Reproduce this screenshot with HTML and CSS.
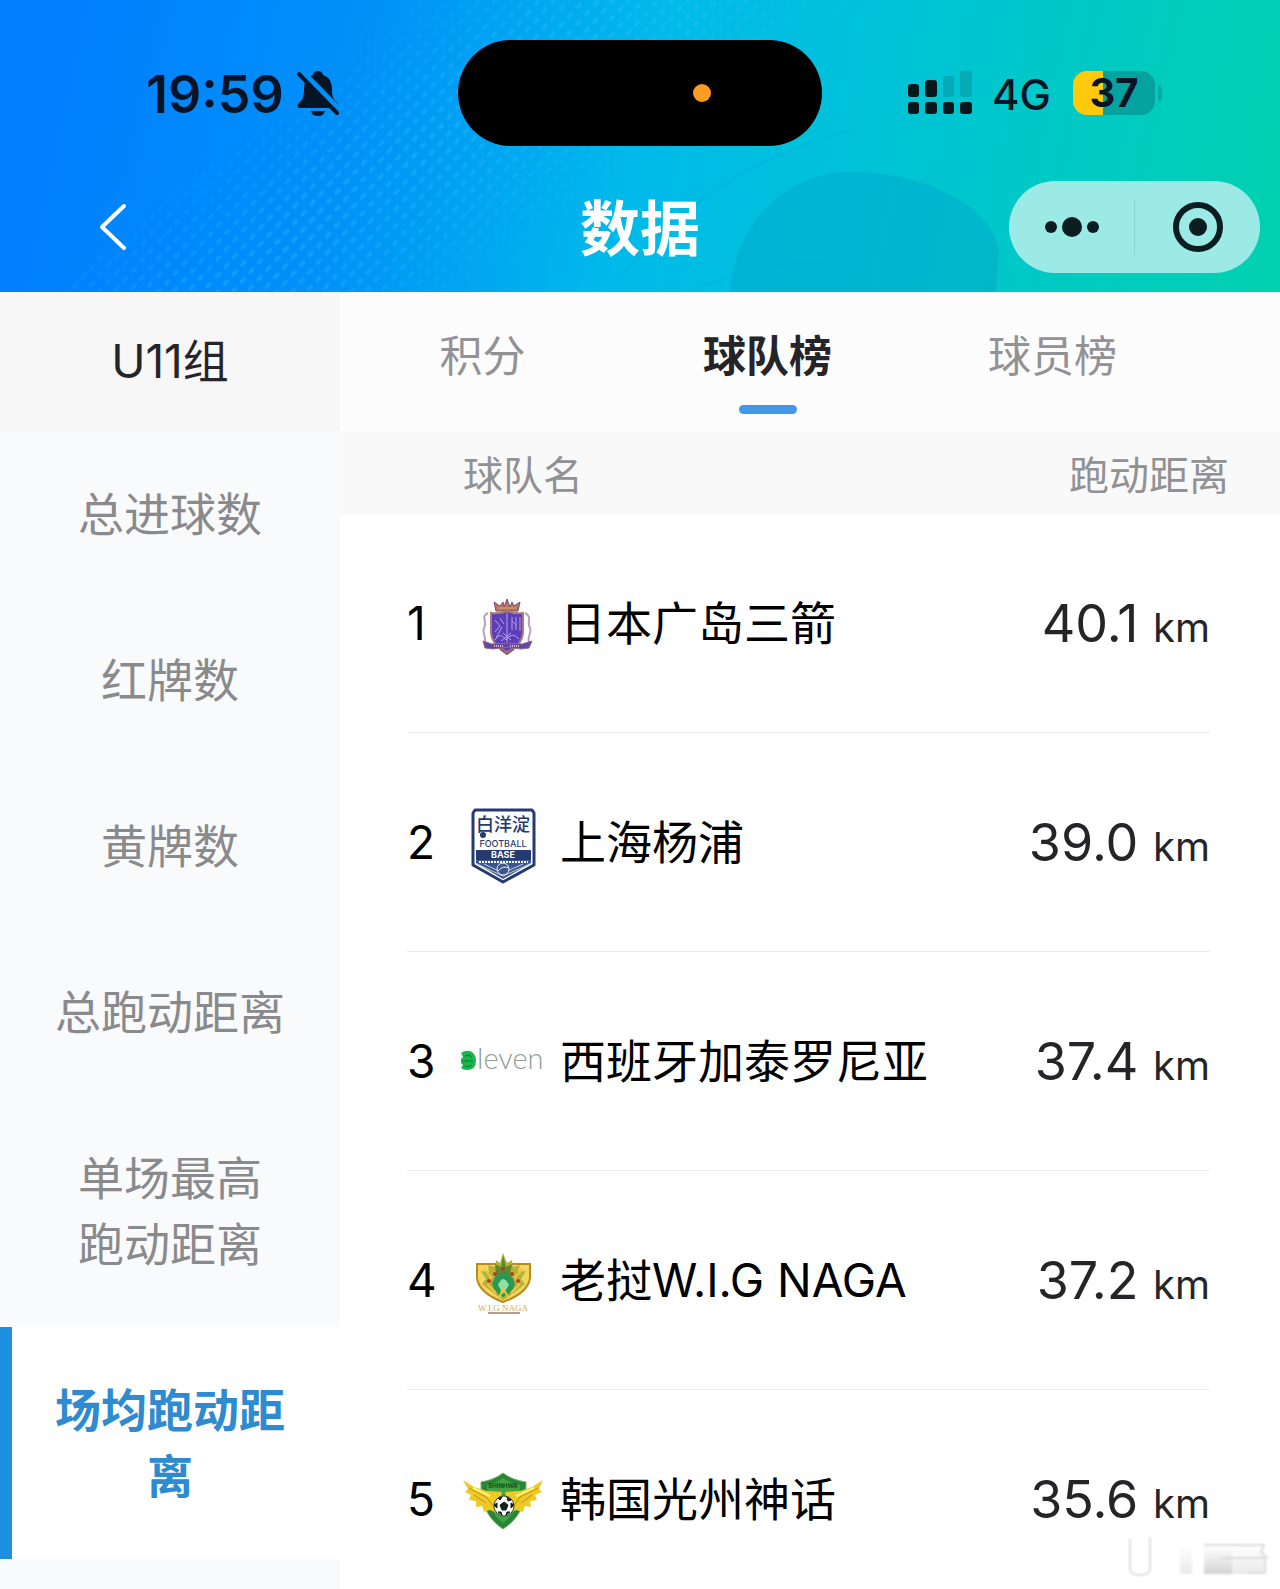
FILE: index.html
```html
<!DOCTYPE html>
<html lang="zh-CN">
<head>
    <meta charset="UTF-8">
    <meta name="viewport" content="width=device-width, initial-scale=1.0">
    <title>数据</title>
    <link rel="stylesheet" href="styles.css">
</head>
<body>
    <header class="header">
        <!-- Dotted texture and soft circles behind the header -->
        <svg class="header-art" viewBox="0 0 1280 292" preserveAspectRatio="none" aria-hidden="true">
            <defs>
                <pattern id="dots" width="13" height="11" patternUnits="userSpaceOnUse" patternTransform="rotate(-48)">
                    <ellipse cx="6" cy="5" rx="4" ry="2" fill="#3cc4ff"/>
                </pattern>
                <linearGradient id="fade" gradientUnits="userSpaceOnUse" x1="330" y1="40" x2="530" y2="310">
                    <stop offset="0" stop-color="#fff" stop-opacity="0"/>
                    <stop offset="0.4" stop-color="#fff" stop-opacity="0.3"/>
                    <stop offset="0.65" stop-color="#fff" stop-opacity="0.2"/>
                    <stop offset="0.9" stop-color="#fff" stop-opacity="0"/>
                </linearGradient>
                <mask id="band"><polygon points="60,292 380,0 860,0 480,292" fill="url(#fade)"/></mask>
            </defs>
            <rect width="1280" height="292" fill="url(#dots)" mask="url(#band)"/>
            <path d="M730 292 C735 225 785 172 850 172 C925 172 990 205 999 250 L996 292 Z" fill="#00a8cc" opacity="0.5"/>
            <path d="M610 292 C660 220 740 160 850 130 M690 292 C740 270 780 262 830 262" fill="none" stroke="#009fd8" stroke-width="2" opacity="0.2"/>
        </svg>

        <div class="status-bar">
            <div class="status-left">
                <span class="time">19:59</span>
                <svg class="bell" viewBox="0 0 42 46" aria-hidden="true">
                    <path d="M21 1 C24 1 26 3 26 5 C33 7 35 13 35 20 C35 28 38 31 41 34 C42 36 41 38 39 38 L3 38 C1 38 0 36 1 34 C5 30 7 28 7 20 C7 13 9 7 16 5 C16 3 18 1 21 1 Z" fill="#071426"/>
                    <path d="M14 41 H28 C27 44 25 46 21 46 C17 46 15 44 14 41 Z" fill="#071426"/>
                    <path d="M3 1 L41 40" stroke="#0091f8" stroke-width="8"/>
                    <path d="M2 4 L40 43" stroke="#071426" stroke-width="4" stroke-linecap="round"/>
                </svg>
            </div>
            <div class="island"><span class="island-dot"></span></div>
            <div class="status-right">
                <svg class="signal" viewBox="0 0 64 44" aria-hidden="true">
                    <g fill="#06181c">
                        <rect x="0" y="13" width="11" height="13" rx="3"/>
                        <rect x="17" y="9" width="12" height="17" rx="3"/>
                        <rect x="0" y="31" width="11" height="12" rx="3"/>
                        <rect x="17" y="31" width="12" height="12" rx="3"/>
                        <rect x="35" y="31" width="11" height="12" rx="3"/>
                        <rect x="52" y="31" width="12" height="12" rx="3"/>
                    </g>
                    <g fill="#04aab5">
                        <rect x="35" y="5" width="11" height="21" rx="3"/>
                        <rect x="52" y="0" width="12" height="26" rx="3"/>
                    </g>
                </svg>
                <span class="network">4G</span>
                <span class="battery">37</span>
                <span class="battery-tip"></span>
            </div>
        </div>

        <div class="nav-bar">
            <button class="back" type="button" aria-label="返回">
                <svg width="28" height="48" viewBox="0 0 28 48" aria-hidden="true">
                    <path d="M25 3 L3 24 L25 45" fill="none" stroke="#fff" stroke-width="4" stroke-linecap="round" stroke-linejoin="round"/>
                </svg>
            </button>
            <h1 class="title">数据</h1>
            <div class="capsule">
                <button type="button" aria-label="更多">
                    <svg width="56" height="20" viewBox="0 0 56 20" aria-hidden="true">
                        <g fill="#0b1d20"><circle cx="7" cy="10" r="6"/><circle cx="28" cy="10" r="10"/><circle cx="49" cy="10" r="6"/></g>
                    </svg>
                </button>
                <button type="button" aria-label="关闭">
                    <svg width="50" height="50" viewBox="0 0 50 50" aria-hidden="true">
                        <circle cx="25" cy="25" r="22" fill="none" stroke="#0b1d20" stroke-width="6"/>
                        <circle cx="25" cy="25" r="9" fill="#0b1d20"/>
                    </svg>
                </button>
            </div>
        </div>
    </header>

    <div class="content">
        <nav class="sidebar">
            <div class="group">U11组</div>
            <a class="side-item" href="#">总进球数</a>
            <a class="side-item" href="#">红牌数</a>
            <a class="side-item" href="#">黄牌数</a>
            <a class="side-item" href="#">总跑动距离</a>
            <a class="side-item" href="#">单场最高<br>跑动距离</a>
            <a class="side-item active" href="#">场均跑动距离</a>
        </nav>

        <main class="main">
            <div class="tabs">
                <button class="tab" type="button">积分</button>
                <button class="tab active" type="button">球队榜</button>
                <button class="tab" type="button">球员榜</button>
            </div>

            <table class="ranking">
                <thead>
                    <tr><th>球队名</th><th>跑动距离</th></tr>
                </thead>
                <tbody>
                    <tr>
                        <td class="rank">1</td>
                        <td class="team">
                            <svg class="badge" viewBox="0 0 96 90" aria-hidden="true">
                                <path d="M41 33 L39 24 L45 28 L48 24 L49 29 L52 21 L55 29 L57 24 L59 28 L65 24 L63 33 Z" fill="#b9765c" stroke="#715076" stroke-width="1"/>
                                <path d="M43 30 H61" stroke="#e3a65e" stroke-width="1"/>
                                <path d="M33 35 C25 39 33 44 29 50 C27 55 31 58 30 64 M70 35 C78 39 71 44 75 50 C77 55 72 58 74 64" fill="none" stroke="#b9a0bd" stroke-width="2"/>
                                <path d="M36 35 Q44 36 52 33 Q60 36 68 35 V55 Q67 67 52 74 Q37 67 36 55 Z" fill="#5d3db8" stroke="#a97b7b" stroke-width="2"/>
                                <path d="M52 35 V64 M40 42 L45 48 L40 54 M45 40 L49 46 M47 49 L41 60 M57 39 V52 M61 39 V52 M57 43 L61 47 M65 39 V53 M40 62 Q45 53 51 62 Q57 53 64 61 M48 55 L56 62 M56 55 L46 63" fill="none" stroke="#b5a3e5" stroke-width="1"/>
                                <path d="M28 63 L37 66 Q52 64 67 66 L77 63 L74 70 L66 71 Q52 68 38 71 L30 70 Z" fill="#6545a4" stroke="#8e6a94" stroke-width="1"/>
                                <path d="M39 68 H48 M55 68 H65" stroke="#d4b6bd" stroke-width="2" stroke-dasharray="1 1"/>
                                <path d="M45 71 L52 76 L59 71" fill="none" stroke="#8a5870" stroke-width="2"/>
                            </svg>
                            日本广岛三箭
                        </td>
                        <td class="value">40.1 <small>km</small></td>
                    </tr>
                    <tr>
                        <td class="rank">2</td>
                        <td class="team">
                            <svg class="badge" viewBox="0 0 96 90" aria-hidden="true">
                                <path d="M20 13 H77 L79 16 V68 L48 85 L18 68 V16 Z" fill="#fff" stroke="#253a70" stroke-width="3" stroke-linejoin="round"/>
                                <text x="48" y="34" text-anchor="middle" class="crest-cn">白洋淀</text>
                                <circle cx="28" cy="38" r="3" fill="#253a70"/>
                                <text x="48" y="50" text-anchor="middle" class="crest-line">FOOTBALL</text>
                                <rect x="21" y="53" width="55" height="10" fill="#253a70"/>
                                <text x="48" y="61" text-anchor="middle" class="crest-base">BASE</text>
                                <path d="M21 63 H76 V66 L48 82 L21 66 Z" fill="#3d568e"/>
                                <path d="M24 65 H73" stroke="#fff" stroke-width="2" stroke-dasharray="2 1"/>
                                <path d="M22 67 L48 79 L75 67 M29 67 L48 76 L68 67" fill="none" stroke="#c4cde0" stroke-width="1"/>
                                <circle cx="48" cy="72" r="6" fill="#3d568e" stroke="#eef1f7" stroke-width="1"/>
                                <path d="M43 74 Q48 68 54 71" fill="none" stroke="#eef1f7" stroke-width="1"/>
                            </svg>
                            上海杨浦
                        </td>
                        <td class="value">39.0 <small>km</small></td>
                    </tr>
                    <tr>
                        <td class="rank">3</td>
                        <td class="team">
                            <svg class="badge" viewBox="0 0 96 90" aria-hidden="true">
                                <path d="M6 37 Q12 33 17 36 Q21 39 21 45 Q21 54 12 54 Q8 54 6 52 L8 49 L6 47 V43 L8 41 Z" fill="#18b64c"/>
                                <path d="M8 45 H18 M10 40 Q14 38 17 41 M10 50 Q14 52 17 49" fill="none" stroke="#08772c" stroke-width="1"/>
                                <text x="22" y="53" class="crest-eleven">leven</text>
                            </svg>
                            西班牙加泰罗尼亚
                        </td>
                        <td class="value">37.4 <small>km</small></td>
                    </tr>
                    <tr>
                        <td class="rank">4</td>
                        <td class="team">
                            <svg class="badge" viewBox="0 0 96 90" aria-hidden="true">
                                <path d="M22 29 H75 V43 Q73 58 48 67 Q24 58 22 43 Z" fill="#f2d75c" stroke="#b98a22" stroke-width="2"/>
                                <path d="M48 18 L52 28 L57 25 L58 32 L65 30 L63 37 L71 36 L66 44 L70 49 L60 57 L48 65 L37 57 L27 49 L31 44 L26 36 L34 37 L33 30 L40 32 L41 25 L45 28 Z" fill="#b5b23a"/>
                                <path d="M48 20 L51 32 L57 29 L55 39 L48 62 L41 39 L40 29 L46 32 Z" fill="#5c8a2f"/>
                                <path d="M37 49 Q40 38 48 37 Q57 38 60 49 Q57 59 48 62 Q40 59 37 49 Z" fill="#2b9852"/>
                                <path d="M43 50 Q48 38 54 50 L48 59 Z" fill="#8ce1aa"/>
                                <path d="M29 34 L36 42 L33 50 L41 58 M68 34 L60 42 L64 50 L56 58 M48 53 L44 64 M48 53 L54 64" fill="none" stroke="#edc545" stroke-width="2"/>
                                <g fill="#b73e23"><circle cx="48" cy="34" r="2"/><circle cx="40" cy="39" r="2"/><circle cx="57" cy="39" r="2"/><circle cx="34" cy="46" r="2"/><circle cx="63" cy="46" r="2"/></g>
                                <text x="48" y="76" text-anchor="middle" class="crest-naga">W.I.G NAGA</text>
                                <path d="M33 78 H65" stroke="#5f4420" stroke-width="1"/>
                            </svg>
                            老挝W.I.G NAGA
                        </td>
                        <td class="value">37.2 <small>km</small></td>
                    </tr>
                    <tr>
                        <td class="rank">5</td>
                        <td class="team">
                            <svg class="badge" viewBox="0 0 96 90" aria-hidden="true">
                                <path d="M48 19 Q57 26 71 28 Q72 60 48 75 Q25 60 26 28 Q39 26 48 19 Z" fill="#278536" stroke="#83aa63" stroke-width="1"/>
                                <path d="M48 24 Q57 30 65 31 Q66 56 48 69 Q31 56 32 31 Q40 30 48 24 Z" fill="#45a341"/>
                                <text x="48" y="34" text-anchor="middle" class="crest-shield">SHINHWA</text>
                                <path d="M8 26 L19 33 L32 37 L47 38 L42 59 L35 56 L29 58 L27 52 L21 53 L21 47 L14 46 L16 41 L10 38 L13 35 Z M88 26 L77 33 L65 37 L50 38 L55 59 L61 56 L68 58 L70 52 L76 53 L75 47 L82 46 L80 41 L87 38 L84 35 Z" fill="#efc925"/>
                                <path d="M14 34 L31 43 L39 53 M19 41 L31 49 M83 34 L65 43 L58 53 M77 41 L66 49" fill="none" stroke="#ba9415" stroke-width="1"/>
                                <path d="M18 34 L35 42 M79 34 L61 42" stroke="#fff27b" stroke-width="2"/>
                                <circle cx="49" cy="52" r="10" fill="#fff" stroke="#344332" stroke-width="1"/>
                                <path d="M49 48 L53 51 L51 56 H47 L45 51 Z M43 44 L47 43 L45 46 Z M52 43 L56 46 L53 47 Z M39 51 L42 49 L42 54 Z M59 51 L56 49 L56 54 Z M43 58 L46 58 L47 61 Z M55 58 L52 58 L51 61 Z" fill="#142218" stroke="#142218" stroke-width="1"/>
                            </svg>
                            韩国光州神话
                        </td>
                        <td class="value">35.6 <small>km</small></td>
                    </tr>
                </tbody>
            </table>
        </main>
    </div>

    <!-- Faded corner mark -->
    <svg class="corner-mark" width="152" height="48" viewBox="0 0 152 48" aria-hidden="true">
        <defs>
            <linearGradient id="smear" x1="0" y1="0" x2="0" y2="1">
                <stop offset="0" stop-color="#ddd" stop-opacity="0"/>
                <stop offset="1" stop-color="#d2d2d2"/>
            </linearGradient>
        </defs>
        <path d="M10 6 V36 Q10 42 20 42 Q30 42 30 36 V4" fill="none" stroke="#ddd" stroke-width="2"/>
        <rect x="60" y="12" width="12" height="29" fill="url(#smear)" opacity="0.5"/>
        <rect x="84" y="12" width="28" height="29" fill="url(#smear)"/>
        <rect x="112" y="12" width="32" height="29" fill="url(#smear)" opacity="0.5"/>
        <path d="M84 12 H144 L141 19 L147 25 H100 M145 27 V40 H128" fill="none" stroke="#dcdcdc" stroke-width="2"/>
    </svg>
</body>
</html>
```
FILE: styles.css
```css
:root {
    --blue: #208fe0;
    --text: #252529;
    --muted: #8a8a8d;
    --panel: #f9fafc;
}

* {
    margin: 0;
    padding: 0;
    box-sizing: border-box;
}

body {
    display: flex;
    flex-direction: column;
    height: 100vh;
    overflow: hidden;
    background-color: #fff;
    color: var(--text);
    font-family: Inter, "Noto Sans CJK SC", sans-serif;
    font-size: 46px;
}

button {
    border: none;
    background: none;
    color: inherit;
    font: inherit;
    cursor: pointer;
}

a {
    color: inherit;
    text-decoration: none;
}

svg {
    display: block;
}

/* Header */
.header {
    position: relative;
    flex-shrink: 0;
    padding: 40px 0 19px;
    background: linear-gradient(102deg, #0080ff 6%, #0091f8 28%, #00baea 50%, #00c3d6 68%, #00ccbd 88%, #00d2af 100%);
}

.header-art {
    position: absolute;
    inset: 0;
    width: 100%;
    height: 100%;
}

.status-bar,
.nav-bar {
    position: relative;
    display: grid;
    grid-template-columns: 1fr auto 1fr;
    align-items: center;
}

.status-bar {
    margin-bottom: 35px;
    color: #071426;
}

.status-left {
    display: flex;
    align-items: center;
    gap: 13px;
    padding-left: 146px;
}

.time {
    padding-top: 4px;
    font-size: 52px;
    font-weight: 600;
    line-height: 60px;
}

.bell {
    width: 42px;
    height: 46px;
}

.island {
    display: flex;
    align-items: center;
    justify-content: flex-end;
    width: 364px;
    height: 106px;
    padding-right: 111px;
    border-radius: 53px;
    background-color: #000;
}

.island-dot {
    width: 18px;
    height: 18px;
    border-radius: 50%;
    background-color: #ff9b20;
}

.status-right {
    display: flex;
    align-items: center;
    padding-left: 86px;
}

.signal {
    width: 64px;
    height: 44px;
}

.network {
    margin: 0 22px 0 20px;
    padding-top: 4px;
    font-size: 42px;
    font-weight: 500;
    line-height: 48px;
}

.battery {
    width: 82px;
    height: 44px;
    border-radius: 14px;
    background: linear-gradient(to right, #ffc90c 37%, #05a39f 37%);
    font-size: 40px;
    font-weight: 700;
    line-height: 44px;
    text-align: center;
}

.battery-tip {
    width: 4px;
    height: 15px;
    margin-left: 3px;
    border-radius: 0 4px 4px 0;
    background-color: #05aaa6;
}

.back {
    justify-self: start;
    margin-left: 99px;
}

.title {
    padding-top: 4px;
    color: #fff;
    font-size: 60px;
    font-weight: 700;
    line-height: 88px;
}

.capsule {
    display: flex;
    justify-self: end;
    width: 251px;
    height: 92px;
    margin-right: 20px;
    padding: 18px 0;
    border-radius: 46px;
    background-color: #9beae6;
}

.capsule button {
    display: flex;
    flex: 1;
    align-items: center;
    justify-content: center;
}

.capsule button + button {
    border-left: 1px solid #85d7d5;
}

/* Layout */
.content {
    display: flex;
    flex: 1;
    min-height: 0;
}

.sidebar {
    flex-shrink: 0;
    width: 340px;
    background-color: var(--panel);
    text-align: center;
}

.group {
    height: 139px;
    background-color: #f7f7f8;
    line-height: 138px;
}

.side-item {
    display: block;
    padding: 50px 52px;
    color: var(--muted);
    line-height: 66px;
}

.side-item.active {
    background-color: #fff;
    box-shadow: inset 12px 0 var(--blue);
    color: #2f8bcf;
    font-weight: 700;
}

.main {
    flex: 1;
    min-width: 0;
}

/* Tabs */
.tabs {
    display: flex;
    height: 139px;
    padding-right: 85px;
    background-color: #fcfcfd;
}

.tab {
    display: flex;
    flex: 1;
    flex-direction: column;
    align-items: center;
    padding-top: 34px;
    color: #929296;
    font-size: 43px;
    line-height: 60px;
}

.tab.active {
    color: var(--text);
    font-weight: 700;
}

.tab.active::after {
    content: "";
    width: 58px;
    height: 9px;
    margin-top: 19px;
    border-radius: 5px;
    background-color: #4398e8;
}

/* Ranking */
.ranking,
.ranking thead,
.ranking tbody {
    display: block;
}

.ranking thead tr {
    display: flex;
    justify-content: space-between;
    padding: 6px 51px 0 123px;
    background-color: #f9f9fa;
}

.ranking th {
    color: #919193;
    font-size: 40px;
    font-weight: 400;
    line-height: 77px;
}

.ranking tbody tr {
    display: flex;
    align-items: center;
    height: 219px;
    margin: 0 70px 0 67px;
    border-bottom: 1px solid #ececee;
    color: #000;
    line-height: 66px;
}

.rank {
    width: 48px;
}

.team {
    display: flex;
    flex: 1;
    align-items: center;
    gap: 9px;
    white-space: nowrap;
}

.value {
    padding-top: 6px;
    color: var(--text);
    font-size: 52px;
}

.value small {
    font-size: 40px;
}

.badge {
    flex-shrink: 0;
    width: 96px;
    height: 90px;
}

.crest-cn {
    fill: #253a70;
    font-size: 18px;
    font-weight: 500;
}

.crest-line {
    fill: #253a70;
    font-size: 9px;
    font-weight: 500;
}

.crest-base {
    fill: #fff;
    font-size: 9px;
    font-weight: 700;
}

.crest-eleven {
    fill: #8f9e94;
    font-family: Lato, sans-serif;
    font-size: 29px;
    font-weight: 300;
}

.crest-naga {
    fill: #d5a950;
    font-family: "Liberation Serif", serif;
    font-size: 9px;
}

.crest-shield {
    fill: #164c20;
    font-size: 6px;
    font-weight: 700;
}

.corner-mark {
    position: absolute;
    right: 8px;
    bottom: 8px;
    filter: blur(1px);
}
```
